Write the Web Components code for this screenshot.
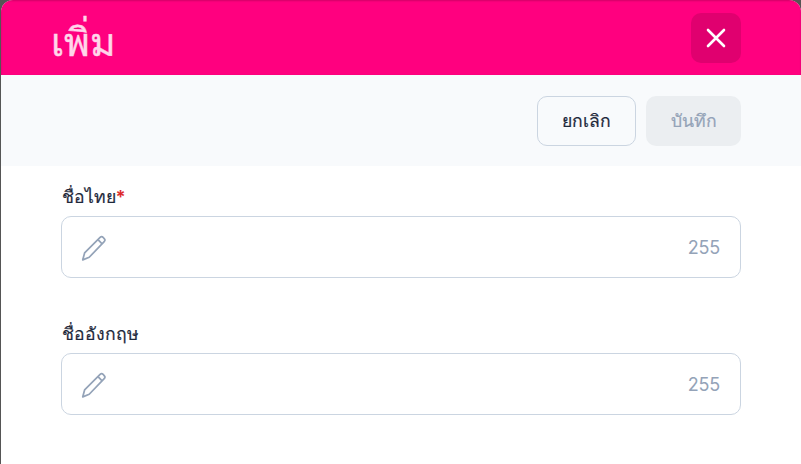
<!DOCTYPE html>
<html lang="th"><head><meta charset="utf-8">
<style>
html,body{margin:0;height:100%;background:#555;overflow:hidden}
body{font-family:Inter,"Noto Sans",sans-serif;padding-left:1px;box-sizing:border-box;height:464px}
</style></head><body>
<add-modal title-text="เพิ่ม">
  <text-field label="ชื่อไทย" required></text-field>
  <text-field label="ชื่ออังกฤษ"></text-field>
</add-modal>
<script>
class AddModal extends HTMLElement{
  constructor(){super();const s=this.attachShadow({mode:'open'});
  s.innerHTML=`<style>
  :host{display:flex;flex-direction:column;height:464px;background:#fff;border-radius:12px 12px 0 0;overflow:hidden;color:#1e293b}
  header{height:75px;box-sizing:border-box;background:#ff007f;display:flex;align-items:center;justify-content:space-between;padding:0 60px 0 50px;flex:none;box-shadow:inset 0 1px 2px rgba(120,0,60,.35)}
  h1{margin:0;font-size:39px;font-weight:500;-webkit-text-stroke:.4px #ffd6ea;color:#ffd6ea;line-height:1;position:relative;top:4px}
  .close{width:50px;height:50px;border:0;border-radius:10px;background:#e0006f;display:flex;align-items:center;justify-content:center;padding:0}
  .bar{height:91px;box-sizing:border-box;background:#f8fafc;display:flex;justify-content:flex-end;align-items:flex-start;gap:10px;padding:21px 60px 0;flex:none}
  button.b{height:50px;border-radius:10px;font:500 17.6px Inter,"Noto Sans",sans-serif;-webkit-text-stroke:.2px currentColor;box-sizing:border-box;padding:0}
  .cancel{width:99px;background:#f8fafc;border:1px solid #cbd5e1;color:#1e293b}
  .save{width:95px;background:#ebeef1;border:0;color:#94a3b8}
  main{padding:19px 60px 0;display:flex;flex-direction:column;gap:44px}
  </style>
  <header><h1></h1><button class="close" aria-label="ปิด"><svg width="20" height="20" viewBox="0 0 20 20" fill="none" stroke="#fff" stroke-width="2.6" stroke-linecap="round"><path d="M2 2 18 18M18 2 2 18"/></svg></button></header>
  <div class="bar"><button class="b cancel">ยกเลิก</button><button class="b save">บันทึก</button></div>
  <main><slot></slot></main>`;
  s.querySelector('h1').textContent=this.getAttribute('title-text');}
}
class TextField extends HTMLElement{
  constructor(){super();const s=this.attachShadow({mode:'open'});
  s.innerHTML=`<style>
  :host{display:block}
  label{display:block;font-size:17.6px;font-weight:500;-webkit-text-stroke:.2px currentColor;line-height:24px;height:24px;margin-bottom:7px;padding-left:1px;color:#1e293b}
  i{font-style:normal;color:#dc2626}
  .box{height:62px;box-sizing:border-box;border:1px solid #cbd5e1;border-radius:10px;background:#fff;display:flex;align-items:center;justify-content:space-between;padding:0 20px 0 17px}
  span{font-size:18px;color:#94a3b8;letter-spacing:-.2px}
  svg{display:block;position:relative;top:1px}
  </style>
  <label></label>
  <div class="box"><svg width="28" height="28" viewBox="0 0 26 26" fill="none" stroke="#94a3b8" stroke-width="1.6" stroke-linejoin="round"><path d="M3.5 24 5.2 17.6 19.6 3.2a2 2 0 0 1 2.8 0l1 1a2 2 0 0 1 0 2.8L9.5 21.6Z"/><path d="M17.6 5.2 21.5 9.2"/></svg><span>255</span></div>`;
  const l=s.querySelector('label');l.textContent=this.getAttribute('label');
  if(this.hasAttribute('required')){const i=document.createElement('i');i.textContent='*';l.append(i);}}
}
customElements.define('add-modal',AddModal);
customElements.define('text-field',TextField);
</script>
</body></html>
